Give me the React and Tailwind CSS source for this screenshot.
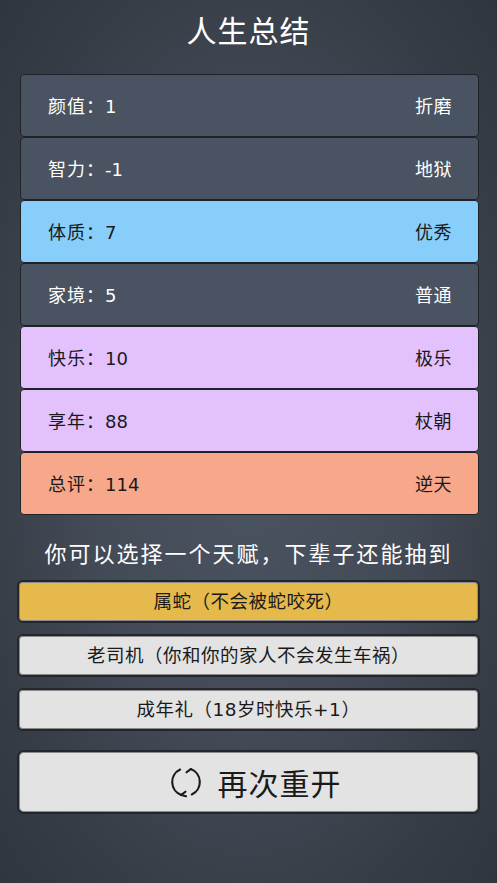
import React from "react";

const rows = [
  { label: "颜值", value: "1", grade: "折磨", bg: "bg-[#4a5361]", text: "text-white" },
  { label: "智力", value: "-1", grade: "地狱", bg: "bg-[#4a5361]", text: "text-white" },
  { label: "体质", value: "7", grade: "优秀", bg: "bg-[#87cefa]", text: "text-[#1a1a1a]" },
  { label: "家境", value: "5", grade: "普通", bg: "bg-[#4a5361]", text: "text-white" },
  { label: "快乐", value: "10", grade: "极乐", bg: "bg-[#e3c1fd]", text: "text-[#1a1a1a]" },
  { label: "享年", value: "88", grade: "杖朝", bg: "bg-[#e3c1fd]", text: "text-[#1a1a1a]" },
  { label: "总评", value: "114", grade: "逆天", bg: "bg-[#f7a88a]", text: "text-[#1a1a1a]" },
];

const talents = [
  { t: "属蛇（不会被蛇咬死）", bg: "bg-[#e5b94b]" },
  { t: "老司机（你和你的家人不会发生车祸）", bg: "bg-[#e3e3e3]" },
  { t: "成年礼（18岁时快乐+1）", bg: "bg-[#e3e3e3]" },
];

function RefreshIcon() {
  return (
    <svg width="36" height="36" viewBox="0 0 34 34" fill="none" stroke="#1a1a1a" strokeWidth="2" strokeLinecap="round" strokeLinejoin="round">
      <path d="M11.5 5.2 A13 13 0 0 0 12.5 29.2" />
      <path d="M12.5 29.2 L16.5 26.2" />
      <path d="M12.5 29.2 L17 30.5" />
      <path d="M22.5 28.8 A13 13 0 0 0 21.5 4.8" />
      <path d="M21.5 4.8 L17.5 7.8" />
    </svg>
  );
}

export default function App() {
  return (
    <div className="w-[497px] h-[883px] overflow-hidden bg-[radial-gradient(ellipse_at_50%_50%,#4b5461_0%,#434b57_45%,#363c45_80%,#30363e_100%)] font-['DejaVu_Sans','Noto_Sans_CJK_SC',sans-serif]">
      <div className="flex flex-col items-center pt-[11px]">
        <h1 className="text-[30px] leading-[36px] text-white font-['Noto_Sans_CJK_SC',sans-serif] tracking-[1px]">人生总结</h1>
      </div>
      <div className="mx-[20px] mt-[27px] w-[459px] flex flex-col">
        {rows.map((r, i) => (
          <div
            key={i}
            className={`${r.bg} ${r.text} h-[63px] border border-[#1f2328] rounded-[4px] flex items-center justify-between pl-[27px] pr-[26px] text-[18px]`}
          >
            <span>
              <span className="font-['Noto_Sans_CJK_SC',sans-serif] tracking-[1px]">{r.label}：</span>
              {r.value}
            </span>
            <span className="font-['Noto_Sans_CJK_SC',sans-serif] tracking-[0.5px]">{r.grade}</span>
          </div>
        ))}
      </div>
      <div className="mt-[22px] text-center text-white text-[22px] leading-[30px] tracking-[2px] font-['Noto_Sans_CJK_SC',sans-serif]">
        你可以选择一个天赋，下辈子还能抽到
      </div>
      <div className="mx-[17px] mt-[13px] flex flex-col gap-[11px]">
        {talents.map((t, i) => (
          <div
            key={i}
            className={`${t.bg} h-[43px] border-2 border-[#23272d] rounded-[6px] shadow-[inset_0_0_0_1px_#8a8a8a] flex items-center justify-center text-[18.5px] tracking-[0.5px] text-[#1a1a1a]`}
          >
            {t.t}
          </div>
        ))}
      </div>
      <div className="mx-[17px] mt-[19px] h-[64px] bg-[#e3e3e3] border-2 border-[#23272d] rounded-[7px] shadow-[inset_0_0_0_1px_#8a8a8a] flex items-center justify-center gap-[14px] pl-[12px]">
        <RefreshIcon />
        <span className="text-[30px] text-[#1a1a1a] font-['Noto_Sans_CJK_SC',sans-serif] tracking-[1px]">再次重开</span>
      </div>
    </div>
  );
}
